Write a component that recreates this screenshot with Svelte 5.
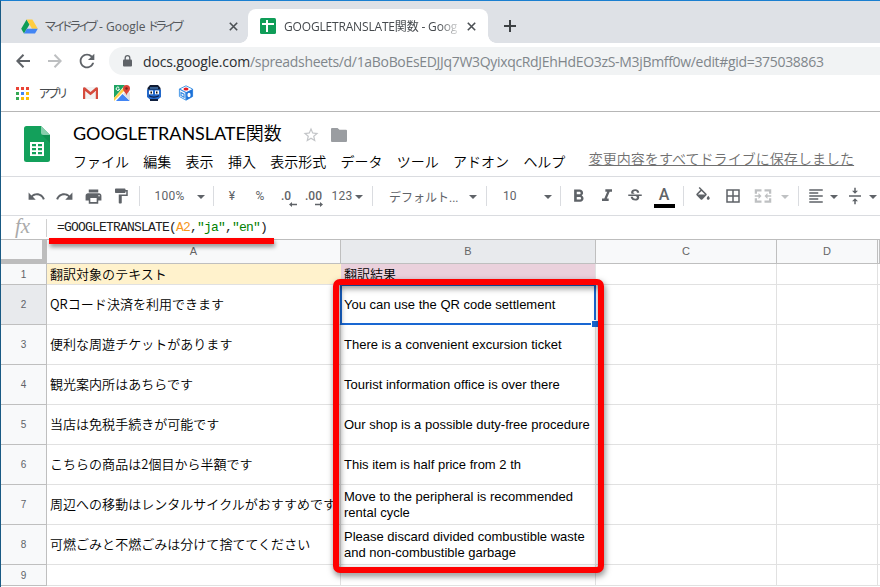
<script>
  const menus = ['ファイル', '編集', '表示', '挿入', '表示形式', 'データ', 'ツール', 'アドオン', 'ヘルプ'];

  const appDots = ['#ea4335', '#ea4335', '#ea4335', '#34a853', '#4285f4', '#fbbc05', '#34a853', '#fbbc05', '#fbbc05'];

  const icons = {
    undo: 'M12.5 8c-2.65 0-5.05.99-6.9 2.6L2 7v9h9l-3.62-3.62c1.39-1.16 3.16-1.88 5.12-1.88 3.54 0 6.55 2.31 7.6 5.5l2.37-.78C21.08 11.03 17.15 8 12.5 8z',
    redo: 'M18.4 10.6C16.55 8.99 14.15 8 11.5 8c-4.65 0-8.58 3.03-9.96 7.22L3.9 16c1.05-3.19 4.05-5.5 7.6-5.5 1.95 0 3.73.72 5.12 1.88L13 16h9V7l-3.6 3.6z',
    print: 'M19 8H5c-1.66 0-3 1.34-3 3v6h4v4h12v-4h4v-6c0-1.66-1.34-3-3-3zm-3 11H8v-5h8v5zm3-7c-.55 0-1-.45-1-1s.45-1 1-1 1 .45 1 1-.45 1-1 1zm-1-9H6v4h12V3z',
    paint: 'M18 4V3c0-.55-.45-1-1-1H5c-.55 0-1 .45-1 1v4c0 .55.45 1 1 1h12c.55 0 1-.45 1-1V6h1v4H9v11c0 .55.45 1 1 1h2c.55 0 1-.45 1-1v-9h8V4h-3z',
    bold: 'M15.6 10.79c.97-.67 1.65-1.77 1.65-2.79 0-2.26-1.75-4-4-4H7v14h7.04c2.09 0 3.71-1.7 3.71-3.79 0-1.52-.86-2.82-2.15-3.42zM10 6.5h3c.83 0 1.5.67 1.5 1.5s-.67 1.5-1.5 1.5h-3v-3zm3.5 9H10v-3h3.5c.83 0 1.5.67 1.5 1.5s-.67 1.5-1.5 1.5z',
    italic: 'M10 4v3h2.21l-3.42 8H6v3h8v-3h-2.21l3.42-8H18V4z',
    strike: 'M6.85 7.08C6.85 4.37 9.45 3 12.24 3c1.64 0 3 .49 3.9 1.28.77.65 1.46 1.73 1.46 3.24h-3.01c0-.31-.05-.59-.15-.85-.29-.86-1.2-1.28-2.25-1.28-1.86 0-2.34 1.02-2.34 1.7 0 .48.25.88.74 1.21.38.25.77.48 1.41.7H7.39c-.21-.34-.54-.89-.54-1.92zM21 12v-2H3v2h9.62c1.15.45 1.96.75 1.96 1.97 0 1-.81 1.67-2.28 1.67-1.54 0-2.93-.54-2.93-2.51H6.4c0 .55.08 1.13.24 1.58.81 2.29 3.29 3.3 5.67 3.3 2.27 0 5.3-.89 5.3-4.05 0-.3-.01-1.16-.48-1.94H21V12z',
    fill: 'M16.56 8.94L7.62 0 6.21 1.41l2.38 2.38-5.15 5.15c-.59.59-.59 1.54 0 2.12l5.5 5.5c.29.29.68.44 1.06.44s.77-.15 1.06-.44l5.5-5.5c.59-.58.59-1.53 0-2.12zM5.21 10L10 5.21 14.79 10H5.21zM19 11.500s-2 2.170-2 3.500c0 1.100.9 2 2 2s2-.9 2-2c0-1.330-2-3.500-2-3.500z',
    borders: 'M3 3v18h18V3H3zm8 16H5v-6h6v6zm0-8H5V5h6v6zm8 8h-6v-6h6v6zm0-8h-6V5h6v6z',
    merge: 'M1 3h9v3H4v3H1zM14 3h9v6h-3V6h-6zM1 15h3v3h6v3H1zM20 15h3v6h-9v-3h6zM1 11h5V8l4 4-4 4v-3H1zM23 11h-5V8l-4 4 4 4v-3h5z',
    align: 'M15 15H3v2h12v-2zm0-8H3v2h12V7zM3 13h18v-2H3v2zm0 8h18v-2H3v2zM3 3v2h18V3H3z',
    valign: 'M8 19h3v4h2v-4h3l-4-4-4 4zm8-14h-3V1h-2v4H8l4 4 4-4zM4 11v2h16v-2H4z'
  };

  const tools = [
    { icon: 'undo', w: 28, size: 19 },
    { icon: 'redo', w: 29, size: 19 },
    { icon: 'print', w: 28, size: 19 },
    { icon: 'paint', w: 28, size: 18 },
    { sep: true, w: 8 },
    { text: '100%', w: 50, cls: 'zoom' },
    { caret: true, w: 16 },
    { sep: true, w: 8 },
    { text: '¥', w: 30 },
    { text: '%', w: 26 },
    { decimal: '.0', w: 26 },
    { decimal: '.00', w: 29 },
    { text: '123', w: 25, cls: 'formats' },
    { caret: true, w: 12 },
    { sep: true, w: 14 },
    { text: 'デフォルト...', w: 86, cls: 'font' },
    { caret: true, w: 16 },
    { sep: true, w: 10 },
    { text: '10', w: 49, cls: 'size' },
    { caret: true, w: 16 },
    { sep: true, w: 8 },
    { icon: 'bold', w: 28, size: 21 },
    { icon: 'italic', w: 29, size: 20 },
    { icon: 'strike', w: 28, size: 18 },
    { color: true, w: 30 },
    { sep: true, w: 8 },
    { icon: 'fill', w: 32, size: 18 },
    { icon: 'borders', w: 28, size: 18 },
    { icon: 'merge', w: 32, size: 18, off: true },
    { caret: true, w: 12, off: true },
    { sep: true, w: 14 },
    { icon: 'align', w: 22, size: 18 },
    { caret: true, w: 14 },
    { icon: 'valign', w: 27, size: 18 },
    { caret: true, w: 10 }
  ];

  const rows = [
    { n: 1, a: '翻訳対象のテキスト', b: '翻訳結果' },
    { n: 2, a: 'QRコード決済を利用できます', b: 'You can use the QR code settlement' },
    { n: 3, a: '便利な周遊チケットがあります', b: 'There is a convenient excursion ticket' },
    { n: 4, a: '観光案内所はあちらです', b: 'Tourist information office is over there' },
    { n: 5, a: '当店は免税手続きが可能です', b: 'Our shop is a possible duty-free procedure' },
    { n: 6, a: 'こちらの商品は2個目から半額です', b: 'This item is half price from 2 th' },
    { n: 7, a: '周辺への移動はレンタルサイクルがおすすめです', b: 'Move to the peripheral is recommended rental cycle' },
    { n: 8, a: '可燃ごみと不燃ごみは分けて捨ててください', b: 'Please discard divided combustible waste and non-combustible garbage' },
    { n: 9, a: '', b: '' }
  ];
</script>

<div class="window">
  <div class="tabstrip">
    <div class="tab">
      <svg class="favicon" width="17" height="15" viewBox="0 0 17 15">
        <path fill="#0f9d58" d="M5.6 0.500 8.500 5.400 3 14.500 0.200 9.800z" />
        <path fill="#ffcd40" d="M5.600 0.500h5.800l5.400 9.300h-5.800z" />
        <path fill="#4285f4" d="M5.800 9.800h11l-2.800 4.700H3z" />
      </svg>
      <span class="tab-title drive"><span class="kana">マイドライブ</span> - Google <span class="kana">ドライブ</span></span>
      <svg class="close" width="9" height="9" viewBox="0 0 9 9"><path d="M.8.8l7.400 7.400M8.200.8.8 8.200" /></svg>
    </div>
    <div class="tab active">
      <svg class="favicon" width="16" height="16" viewBox="0 0 16 16">
        <rect width="16" height="16" rx="1.500" fill="#0f9d58" />
        <path fill="#fff" d="M2 5h4V2h2v3h6v2H8v7H6V7H2z" />
      </svg>
      <span class="tab-title fade">GOOGLETRANSLATE関数 - Goog</span>
      <svg class="close" width="9" height="9" viewBox="0 0 9 9"><path d="M.8.8l7.400 7.400M8.200.8.8 8.200" /></svg>
    </div>
    <svg class="newtab" width="12" height="12" viewBox="0 0 12 12"><path d="M6 0v12M0 6h12" /></svg>
  </div>

  <div class="navbar">
    <svg class="nav" width="14" height="14" viewBox="0 0 14 14"><path d="M14 7H1.500M7.500.8 1.300 7l6.200 6.200" /></svg>
    <svg class="nav forward" width="14" height="14" viewBox="0 0 14 14"><path d="M0 7h12.500M6.500.8 12.700 7l-6.200 6.200" /></svg>
    <svg class="reload" width="22" height="22" viewBox="0 0 24 24"><path d="M17.650 6.350C16.200 4.900 14.210 4 12 4c-4.420 0-7.990 3.580-7.990 8s3.570 8 7.990 8c3.730 0 6.840-2.550 7.730-6h-2.080c-.82 2.330-3.040 4-5.650 4-3.310 0-6-2.690-6-6s2.690-6 6-6c1.660 0 3.140.69 4.220 1.780L13 11h7V4l-2.350 2.350z" /></svg>
    <div class="omnibox">
      <svg width="9" height="12" viewBox="0 0 9 12"><path fill="#5f6368" d="M1 4.500h7q1 0 1 1v5q0 1-1 1H1q-1 0-1-1v-5q0-1 1-1z" /><path fill="none" stroke="#5f6368" stroke-width="1.300" d="M2.200 5V3a2.300 2.300 0 0 1 4.600 0v2" /></svg>
      <span class="url"><b>docs.google.com</b>/spreadsheets/d/1aBoBoEsEDJJq7W3QyixqcRdJEhHdEO3zS-M3jBmff0w/edit#gid=375038863</span>
    </div>
  </div>

  <div class="bookmarks">
    <div class="apps">
      {#each appDots as color}
        <i style="background: {color}"></i>
      {/each}
    </div>
    <span class="kana apps-label">アプリ</span>
    <svg class="mark" width="15" height="12" viewBox="0 0 15 12">
      <path fill="#f2f2f2" d="M0 0h15v12H0z" />
      <path fill="#d54b3d" d="M0 1.500V12h2.200V4l5.300 4.200L12.800 4v8H15V1.500Q14.500-.5 12.800.5L7.500 5 2.200.5Q.3-.3 0 1.500z" />
    </svg>
    <svg class="mark" width="16" height="16" viewBox="0 0 16 16">
      <path fill="#1fa463" d="M0 0h11L0 13z" />
      <path fill="#4285f4" d="M2 16 8.500 9 16 16z" />
      <path fill="#ffcf48" d="M0 13 11 1l2 2L0 16z" />
      <path fill="#e1e1e1" d="M9 9l4-4 3 3v8z" />
      <path fill="#db4437" d="M12.500 0a3.500 3.500 0 0 1 3.500 3.500c0 3-3 4-3.500 7-.5-3-3.500-4-3.500-7A3.500 3.500 0 0 1 12.500 0z" />
      <circle cx="12.500" cy="3.500" r="1.200" fill="#7b231d" />
      <path fill="none" stroke="#fff" stroke-width="1" d="M5.200 2.700a1.700 1.700 0 1 0 .3 1.500H4" />
    </svg>
    <svg class="mark" width="16" height="16" viewBox="0 0 16 16">
      <path fill="#111c33" d="M4 0h8l2.500 3v4h-13V3z" />
      <path fill="#5ea3ee" d="M4 2.500h8v1H4z" />
      <path fill="#2368c9" d="M1 4.500h14V12l-3 2.500H4L1 12z" />
      <path fill="#fff" d="M3 5.500h4v3.800H3zM9 5.500h4v3.800H9z" />
      <path fill="#111" d="M4.500 6.500h1.500v2H4.500zM10 6.500h1.500v2H10z" />
      <path fill="none" stroke="#0b1d45" stroke-width="1.200" d="M3 10.800q5 2.800 10 0" />
      <path fill="#10203f" d="M4 14h8v2H4z" />
    </svg>
    <svg class="mark" width="16" height="16" viewBox="0 0 16 16">
      <path fill="#fff" stroke="#4b9be8" d="M8 .8 14.600 4v7.500L8 15.200 1.400 11.500V4z" />
      <path fill="#1d71d8" d="M7.500 7.500 14.600 4v7.500L8 15.200z" />
      <path fill="none" stroke="#3a8ce2" stroke-width="1.200" d="M1.400 4 8 7.500v7.500M3 7.500l3 1.700v3L3 10.500z" />
      <ellipse cx="8" cy="4" rx="2.500" ry="1.500" fill="#e51c23" />
      <ellipse cx="11" cy="10" rx="1.600" ry="2.200" fill="#fff" />
    </svg>
  </div>

  <div class="header">
    <svg class="logo" width="26" height="36" viewBox="0 0 26 36">
      <path fill="#13a05b" d="M2.500 0H17l9 9v24.500q0 2.500-2.500 2.500h-21Q0 36 0 33.500v-31Q0 0 2.500 0z" />
      <path fill="#0c8048" d="M18 9h8v8z" opacity=".5" />
      <path fill="#87ceac" d="M17 0l9 9h-6.500Q17 9 17 6.500z" />
      <path fill="#fff" fill-rule="evenodd" d="M6 16h14v14H6zM8 18v2.200h4V18zM14 18v2.200h4V18zM8 22v2.200h4V22zM14 22v2.200h4V22zM8 26v2.200h4V26zM14 26v2.200h4V26z" />
    </svg>
    <div class="heading">
      <div class="title-row">
        <span class="title">GOOGLETRANSLATE<span class="cjk">関数</span></span>
        <svg class="star" width="18" height="18" viewBox="0 0 24 24"><path d="M22 9.240l-7.190-.62L12 2 9.190 8.630 2 9.240l5.460 4.730L5.820 21 12 17.270 18.180 21l-1.630-7.030L22 9.240zM12 15.400l-3.760 2.270 1-4.280-3.320-2.880 4.380-.38L12 6.100l1.710 4.040 4.380.38-3.320 2.880 1 4.280L12 15.400z" /></svg>
        <svg class="folder" width="16" height="14" viewBox="0 0 16 14"><path d="M1 0h5.500l2 1.700H15q1 0 1 1V13q0 1-1 1H1q-1 0-1-1V1q0-1 1-1z" /></svg>
      </div>
      <div class="menus">
        {#each menus as menu}
          <span>{menu}</span>
        {/each}
        <span class="saved">変更内容をすべてドライブに保存しました</span>
      </div>
    </div>
  </div>

  <div class="toolbar">
    {#each tools as tool}
      <div class="tool {tool.cls || ''}" class:off={tool.off} style="width: {tool.w}px">
        {#if tool.icon}
          <svg width={tool.size} height={tool.size} viewBox="0 0 24 24"><path d={icons[tool.icon]} /></svg>
        {:else if tool.sep}
          <i class="sep"></i>
        {:else if tool.caret}
          <i class="caret"></i>
        {:else if tool.decimal}
          <span class="decimal">
            {tool.decimal}
            <svg class:flip={tool.decimal === '.00'} width="8" height="5" viewBox="0 0 8 5"><path d="M0 2.500 3 0v1.700h5v1.600H3V5z" /></svg>
          </span>
        {:else if tool.color}
          <span class="text-color">A</span>
        {:else}
          <span>{tool.text}</span>
        {/if}
      </div>
    {/each}
  </div>

  <div class="formula-bar">
    <span class="fx">fx</span>
    <span class="formula">=GOOGLETRANSLATE(<span class="ref">A2</span>,<span class="str">"ja"</span>,<span class="str">"en"</span>)</span>
    <div class="underline"></div>
  </div>

  <div class="sheet">
    <div class="row cols">
      <div class="corner"></div>
      <div>A</div>
      <div class="current">B</div>
      <div>C</div>
      <div>D</div>
      <div></div>
    </div>
    {#each rows as row}
      <div class="row" class:short={row.n === 1 || row.n === 9} class:first={row.n === 1}>
        <div class="num" class:current={row.n === 2}>{row.n}</div>
        <div class="cell a">{row.a}</div>
        <div class="cell b" class:jp={row.n === 1}><span>{row.b}</span></div>
        <div class="cell"></div>
        <div class="cell"></div>
        <div class="cell"></div>
      </div>
    {/each}
    <div class="selection"><i></i></div>
    <div class="highlight"></div>
  </div>
</div>

<style>
  :global(body) {
    margin: 0;
    overflow: hidden;
  }

  .window {
    box-sizing: border-box;
    width: 880px;
    height: 587px;
    overflow: hidden;
    border-top: 1px solid #1a7fd0;
    border-left: 1px solid #195a84;
    background: #fff;
    font-family: "Open Sans", "Noto Sans CJK JP", sans-serif;
    color: #000;
  }

  .window * {
    box-sizing: border-box;
  }

  svg {
    flex: none;
  }

  .tabstrip {
    display: flex;
    align-items: flex-end;
    height: 42px;
    background: #dee1e6;
  }

  .tab {
    display: flex;
    align-items: center;
    width: 247px;
    height: 34px;
    padding: 0 10px 0 20px;
    font-size: 12px;
    color: #54585c;
  }

  .tab.active {
    position: relative;
    width: 240px;
    padding: 0 12px;
    border-radius: 8px 8px 0 0;
    background: #fff;
    color: #45494d;
  }

  .tab.active::before,
  .tab.active::after {
    content: "";
    position: absolute;
    bottom: 0;
    left: -8px;
    width: 8px;
    height: 8px;
    background: radial-gradient(circle at 0 0, transparent 7.5px, #fff 8px);
  }

  .tab.active::after {
    left: 240px;
    background: radial-gradient(circle at 100% 0, transparent 7.5px, #fff 8px);
  }

  .tab-title {
    flex: 1;
    margin-left: 8px;
    white-space: nowrap;
  }

  .drive {
    margin-left: 7px;
  }

  .kana {
    font-feature-settings: "palt";
    letter-spacing: -1.9px;
  }

  .fade {
    max-width: 176px;
    letter-spacing: -0.17px;
    mask-image: linear-gradient(90deg, #000 155px, transparent 178px);
  }

  .close {
    margin-left: auto;
    fill: none;
    stroke: #4c5054;
    stroke-width: 1.6;
  }

  .newtab {
    margin: 0 0 11px 16px;
    stroke: #3c4043;
    stroke-width: 2;
  }

  .navbar {
    display: flex;
    align-items: center;
    height: 36px;
    padding-left: 15px;
  }

  .nav {
    margin-right: 18px;
    fill: none;
    stroke: #5f6368;
    stroke-width: 2;
  }

  .nav.forward {
    margin-right: 14px;
    stroke: #bdbfc1;
  }

  .reload {
    margin-right: 11px;
    fill: #5f6368;
  }

  .omnibox {
    display: flex;
    flex: 1;
    align-items: center;
    height: 28px;
    padding-left: 14px;
    border-radius: 14px 0 0 14px;
    background: #f1f3f4;
  }

  .url {
    margin-left: 11px;
    font-size: 14px;
    letter-spacing: -0.32px;
    white-space: nowrap;
    color: #80868b;
  }

  .url b {
    font-weight: 400;
    letter-spacing: -0.15px;
    color: #2b2e31;
  }

  .bookmarks {
    display: flex;
    align-items: center;
    height: 33px;
    padding: 0 0 4px 15px;
    border-bottom: 1px solid #b6b6b6;
    font-size: 12px;
    color: #45494d;
  }

  .apps {
    display: grid;
    grid-template-columns: repeat(3, 3px);
    gap: 2px;
  }

  .apps i {
    height: 3px;
  }

  .apps-label {
    width: 28px;
    margin: 0 16px 0 10px;
    white-space: nowrap;
  }

  .mark {
    margin-right: 16px;
  }

  .header {
    display: flex;
    height: 65px;
    padding: 14px 0 0 23px;
    border-bottom: 1px solid #dadce0;
  }

  .heading {
    margin-left: 23px;
  }

  .title-row {
    display: flex;
    align-items: center;
    height: 17px;
  }

  .title {
    width: 209px;
    margin-top: -2px;
    font-family: Lato, "Noto Sans CJK JP", sans-serif;
    font-size: 18px;
    line-height: 17px;
    letter-spacing: -0.05px;
    white-space: nowrap;
  }

  .cjk {
    font-weight: 350;
  }

  .star {
    margin-left: 20px;
    fill: #c3c5c8;
  }

  .folder {
    margin-left: 11px;
    fill: #9a9da1;
  }

  .menus {
    display: flex;
    gap: 14.3px;
    margin-top: 8px;
    font-family: "Noto Sans CJK JP", sans-serif;
    font-size: 14px;
    font-weight: 350;
    line-height: 20px;
    white-space: nowrap;
  }

  .saved {
    margin: -3px 0 0 9px;
    letter-spacing: 0.05px;
    color: #707070;
    text-decoration: underline;
  }

  .toolbar {
    display: flex;
    align-items: center;
    height: 39px;
    padding-left: 21px;
    border-bottom: 1px solid #dadce0;
    font-family: Roboto, "Noto Sans CJK JP", sans-serif;
    font-size: 12px;
    color: #5f6368;
    fill: #5f6368;
  }

  .tool {
    display: flex;
    flex: none;
    align-items: center;
    justify-content: center;
    height: 38px;
    white-space: nowrap;
  }

  .off {
    opacity: 0.4;
  }

  .zoom {
    padding-left: 3px;
    letter-spacing: 0.2px;
  }

  .formats {
    padding-left: 3px;
    letter-spacing: 0.2px;
  }

  .font {
    justify-content: flex-start;
    padding-left: 10px;
  }

  .size {
    justify-content: flex-start;
    padding-left: 12px;
  }

  .sep {
    width: 1px;
    height: 20px;
    background: #dadce0;
  }

  .caret {
    margin-top: 2px;
    border: 4px solid transparent;
    border-top-color: #5f6368;
    border-bottom: 0;
  }

  .decimal {
    position: relative;
    font-weight: 500;
  }

  .decimal svg {
    position: absolute;
    right: -6px;
    bottom: -4px;
  }

  .decimal .flip {
    right: -1px;
    transform: scaleX(-1);
  }

  .text-color {
    width: 21px;
    height: 23px;
    margin-top: 1px;
    border-bottom: 4px solid #000;
    font-size: 16px;
    font-weight: 500;
    line-height: 19px;
    text-align: center;
  }

  .formula-bar {
    position: relative;
    display: flex;
    align-items: center;
    height: 24px;
    border-bottom: 1px solid #bdbdbd;
  }

  .fx {
    width: 46px;
    height: 18px;
    padding-left: 14px;
    border-right: 1px solid #d0d0d0;
    font: italic 21px/15px "Liberation Serif", serif;
    color: #aaa;
  }

  .formula {
    margin-left: 10px;
    font-family: "Liberation Mono", monospace;
    font-size: 13px;
    letter-spacing: -0.8px;
    white-space: pre;
    color: #222;
  }

  .ref {
    color: #f7981d;
  }

  .str {
    color: #008000;
  }

  .underline {
    position: absolute;
    z-index: 3;
    top: 22px;
    left: 48px;
    width: 225px;
    height: 6px;
    background: #f00;
    box-shadow: 1px 3px 4px rgba(0, 0, 0, 0.4);
  }

  .sheet {
    position: relative;
  }

  .row {
    display: grid;
    grid-template-columns: 46px 294px 255px 181px 101px 2px;
    height: 40px;
  }

  .row > div {
    border-right: 1px solid #e1e1e1;
    border-bottom: 1px solid #e1e1e1;
  }

  .row.short {
    height: 21px;
  }

  .row.cols {
    height: 24px;
    font: 11px/23px "Liberation Sans", sans-serif;
    text-align: center;
    color: #666;
  }

  .row.cols > div,
  .row > .num {
    border-color: #bfbfbf;
    background: #f8f9fa;
  }

  .row.cols > .current,
  .row > .num.current {
    background: #e8eaed;
  }

  .row.cols > .corner {
    border-right: 5px solid #bdbdbd;
    border-bottom: 5px solid #bdbdbd;
  }

  .num {
    display: flex;
    align-items: center;
    justify-content: center;
    font: 10px "Liberation Sans", sans-serif;
    color: #5f6368;
  }

  .cell {
    display: flex;
    align-items: center;
    padding-left: 3px;
  }

  .cell.a,
  .cell.jp {
    padding-bottom: 1px;
    font: 350 13px/18px "Noto Sans CJK JP", sans-serif;
    letter-spacing: 0.03px;
    white-space: nowrap;
  }

  .cell.b:not(.jp) {
    font: 13px/16px "Liberation Sans", sans-serif;
  }

  .first .cell.a {
    border-right-color: #fff2cc;
    background: #fff2cc;
  }

  .first .cell.b {
    background: #ead1dc;
  }

  .selection {
    position: absolute;
    top: 44px;
    left: 339px;
    width: 256px;
    height: 41px;
    border: 2px solid #1967d2;
  }

  .selection i {
    position: absolute;
    right: -4px;
    bottom: -4px;
    width: 7px;
    height: 7px;
    border: 1px solid #fff;
    border-width: 1px 0 0 1px;
    background: #1967d2;
  }

  .highlight {
    position: absolute;
    top: 39px;
    left: 332px;
    width: 271px;
    height: 294px;
    border: 6px solid #f00;
    border-radius: 7px;
    filter: drop-shadow(1px 3px 3px rgba(0, 0, 0, 0.5));
  }
</style>
